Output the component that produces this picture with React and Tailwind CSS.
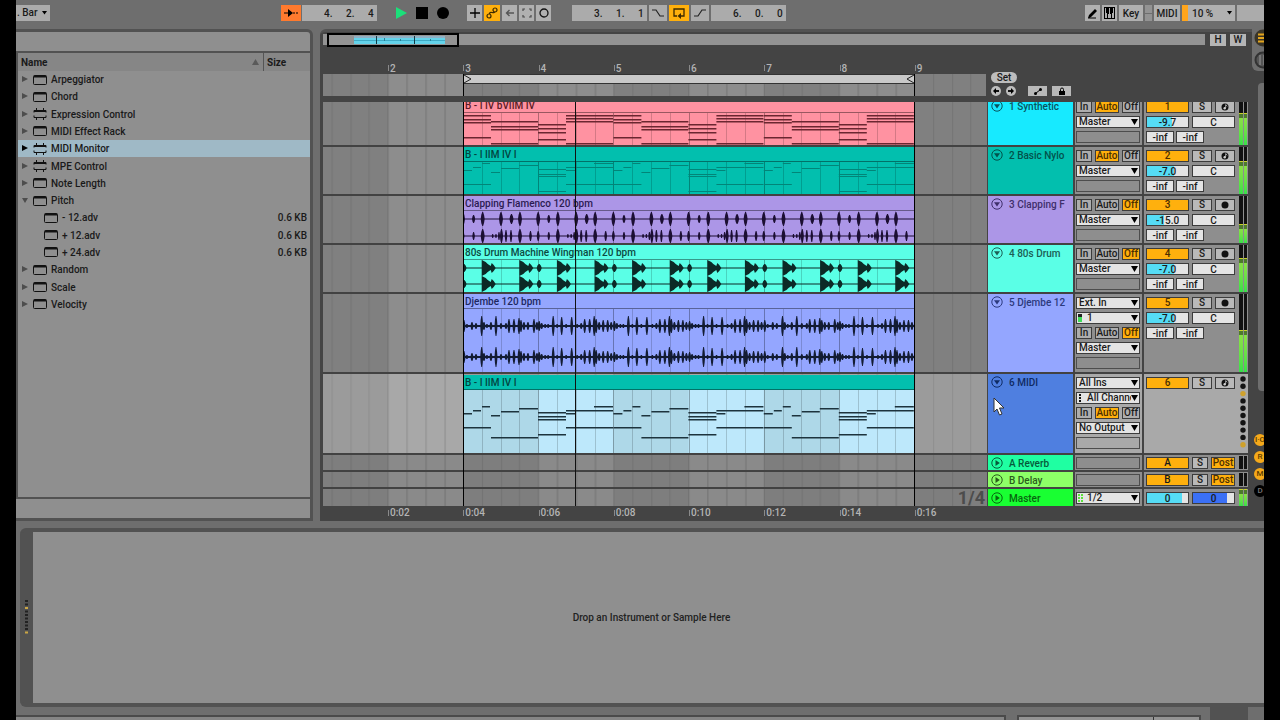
import React, { useState } from "react";

const BAR = 75.2;
const CLIP_W = 452;

// [start, end, y] inside a two bar pattern
const chordNotes = [
  [0, 28, 2], [0, 28, 6], [0, 28, 9], [0, 28, 24],
  [28, 75, 8], [28, 75, 13], [28, 75, 16], [28, 75, 30],
  [75, 103, 11], [75, 103, 15], [75, 103, 19], [75, 103, 26],
  [103, 150, 2], [103, 150, 5], [103, 150, 8], [103, 150, 30],
];

const guitarNotes = [
  [0, 9, 8], [10, 18, 5], [19, 27, 1], [28, 37, 10], [38, 56, 6], [56, 75, 3],
  [0, 28, 22], [28, 75, 32],
  [75, 103, 7], [75, 103, 12], [75, 103, 14], [75, 103, 29],
  [103, 112, 8], [103, 131, 5], [131, 150, 1], [131, 150, 5], [103, 150, 22],
];

const midiNotes = [
  [0, 9, 23], [10, 18, 20], [19, 27, 16], [28, 37, 25], [38, 56, 21], [56, 75, 18],
  [0, 28, 37], [28, 75, 47],
  [75, 103, 22], [75, 103, 26], [75, 103, 29], [75, 103, 44],
  [103, 112, 23], [103, 150, 20], [131, 150, 16], [103, 150, 37],
];

// [x, half height, half width] inside one bar
const clapTop = [[0, 7, 2], [10.6, 4, 1.6], [19.7, 7, 2], [38, 7, 2], [48.5, 5, 2], [57, 7, 2]];
const clapBottom = [
  [0, 5, 1.5], [10.6, 4, 1.3], [19.7, 7, 2], [29.7, 2, 1], [33, 2, 1], [36, 4, 1.1], [38.5, 7, 1.6],
  [43, 6, 1.3], [48, 6, 1.3], [57, 7, 2], [67.5, 5, 1.4],
];
const djembeA = [
  [1, 6], [4, 2], [9, 4], [13, 3], [18.7, 10], [21, 4], [24, 2], [28, 4], [33, 10], [38, 3], [43, 3],
  [46, 7], [51, 7], [56, 8], [58, 6], [61, 4], [65, 4], [71, 7], [74, 4],
];
const djembeB = [
  [1, 5], [3.5, 3], [7, 2], [10, 2], [15, 10], [19, 2], [23.5, 9], [28, 2], [33.5, 9], [39, 2], [43, 3],
  [46.5, 7], [51.5, 7], [56, 10], [58, 7], [61, 4], [65, 6], [69.5, 6], [73, 4],
];

const spike = (x, cy, h, w) =>
  `M${x - w} ${cy}L${x - w * 0.7} ${cy - h * 0.6}L${x - 0.4} ${cy - h}L${x + 0.4} ${cy - h}L${x + w * 0.7} ${cy - h * 0.55}L${x + w} ${cy}L${x + w * 0.7} ${cy + h * 0.55}L${x + 0.4} ${cy + h}L${x - 0.4} ${cy + h}L${x - w * 0.7} ${cy + h * 0.6}Z`;

const kick = (x, cy) =>
  `M${x} ${cy - 8}L${x + 2} ${cy - 7}L${x + 4} ${cy - 6}L${x + 6} ${cy - 4}L${x + 9} ${cy - 2}L${x + 10} ${cy - 5}L${x + 12} ${cy - 3}L${x + 14} ${cy}L${x + 12} ${cy + 3}L${x + 10} ${cy + 5}L${x + 9} ${cy + 2}L${x + 6} ${cy + 4}L${x + 4} ${cy + 6}L${x + 2} ${cy + 7}L${x} ${cy + 8}Z`;

const bars = [0, 1, 2, 3, 4, 5];

function wavePath(kind) {
  let d = "";
  bars.forEach((b) => {
    const x = b * BAR;
    if (kind === "clap") {
      clapTop.forEach((h) => (d += spike(x + h[0], 8, h[1], h[2])));
      clapBottom.forEach((h) => (d += spike(x + h[0], 25, h[1], h[2])));
    }
    if (kind === "drum") {
      [8, 24].forEach((cy) => {
        d += spike(x + 1, cy, 4, 2.5) + kick(x + 18.7, cy) + kick(x + 56.3, cy);
      });
    }
    if (kind === "djembe") {
      const hits = b % 4 === 0 ? djembeA : djembeB;
      [17, 48].forEach((cy) => hits.forEach((h) => (d += spike(x + h[0], cy, h[1], 1.5))));
    }
  });
  return d;
}

const centers = { clap: [8, 25], drum: [8, 24], djembe: [17, 48] };

function ClipBody({ clip, height }) {
  return (
    <svg width={CLIP_W} height={height} className="block" aria-hidden="true">
      {clip.shade &&
        [0, 2, 4].map((b) => (
          <rect key={b} x={b * BAR} y="0" width={BAR} height={height} fill="#aed8e8" />
        ))}
      {Array.from({ length: 24 }, (_, i) => (
        <rect key={i} x={Math.round(i * 18.8)} y="0" width="1" height={height} fill="#000" opacity={i % 4 ? 0.17 : 0.3} />
      ))}
      {clip.notes &&
        [0, 1, 2].map((p) =>
          clip.notes.map((n, i) => (
            <rect
              key={p + "-" + i}
              x={p * 2 * BAR + n[0]}
              y={n[2]}
              width={n[1] - n[0]}
              height={clip.thin ? 1 : 1.5}
              fill={clip.ink}
            />
          )),
        )}
      {clip.wave && (
        <g fill={clip.ink}>
          {centers[clip.wave].map((cy) => (
            <rect key={cy} x="0" y={clip.wave === "djembe" ? cy - 1 : cy - 0.5} width={CLIP_W} height={clip.wave === "djembe" ? 2 : 1} />
          ))}
          <path d={wavePath(clip.wave)} />
        </g>
      )}
    </svg>
  );
}

const tracks = [
  {
    id: "1", name: "1 Synthetic", h: "h-[49px]", body: 33, head: "bg-[#17eaff]", ink: "text-[#07545e]",
    monitor: "Auto", volume: "-9.7", fill: 60, midi: true, level: 58,
    clip: { title: "B - I IV bVIIM IV", bg: "bg-[#ff92a1]", text: "text-[#5c1a24]", notes: chordNotes, ink: "#6b2630" },
  },
  {
    id: "2", name: "2 Basic Nylo", h: "h-[49px]", body: 33, head: "bg-[#02bfae]", ink: "text-[#02524b]",
    monitor: "Auto", volume: "-7.0", fill: 66, midi: true, level: 60,
    clip: { title: "B - I IIM IV I", bg: "bg-[#02bfae]", text: "text-[#02453f]", notes: guitarNotes, ink: "#028578", thin: true },
  },
  {
    id: "3", name: "3 Clapping F", h: "h-[49px]", body: 33, head: "bg-[#ac96e7]", ink: "text-[#3f2f6b]",
    monitor: "Off", volume: "-15.0", fill: 42, level: 30,
    clip: { title: "Clapping Flamenco 120 bpm", bg: "bg-[#ac96e7]", text: "text-[#2b1b52]", wave: "clap", ink: "#1c0f33" },
  },
  {
    id: "4", name: "4 80s Drum", h: "h-[49px]", body: 33, head: "bg-[#5affe6]", ink: "text-[#1c5e54]",
    monitor: "Off", volume: "-7.0", fill: 66, level: 62,
    clip: { title: "80s Drum Machine Wingman 120 bpm", bg: "bg-[#5affe6]", text: "text-[#0c4a42]", wave: "drum", ink: "#0c2a27" },
  },
  {
    id: "5", name: "5 Djembe 12", h: "h-[80px]", body: 63, head: "bg-[#94a6ff]", ink: "text-[#2c3a7d]",
    input: "Ext. In", channel: "1", monitor: "Off", volume: "-7.0", fill: 66, level: 48,
    clip: { title: "Djembe 120 bpm", bg: "bg-[#94a6ff]", text: "text-[#1d2860]", wave: "djembe", ink: "#131c33" },
  },
  {
    id: "6", name: "6 MIDI", h: "h-[81px]", body: 63, head: "bg-[#4f7fe0]", ink: "text-[#0f2b63]",
    input: "All Ins", channel: "All Channels", monitor: "Auto", output: "No Output", midi: true, selected: true,
    clip: { title: "B - I IIM IV I", bg: "bg-[#bde8fb]", titleBg: "bg-[#02bfae]", text: "text-[#02453f]", notes: midiNotes, ink: "#1d333d", shade: true },
  },
];

const returns = [
  { id: "A", name: "A Reverb", head: "bg-[#1fffa2]", ink: "text-[#06593a]" },
  { id: "B", name: "B Delay", head: "bg-[#8dff67]", ink: "text-[#2b5c1c]" },
];

const devices = [
  { name: "Arpeggiator" },
  { name: "Chord" },
  { name: "Expression Control", max: true },
  { name: "MIDI Effect Rack" },
  { name: "MIDI Monitor", max: true },
  { name: "MPE Control", max: true },
  { name: "Note Length" },
  { name: "Pitch", open: true },
  { name: "- 12.adv", child: true },
  { name: "+ 12.adv", child: true },
  { name: "+ 24.adv", child: true },
  { name: "Random" },
  { name: "Scale" },
  { name: "Velocity" },
];

function LaneGrid({ id, light, dark, line }) {
  return (
    <svg className="absolute inset-0 h-full w-full" aria-hidden="true">
      <defs>
        <pattern id={id} x="140" y="0" width={BAR * 2} height="100" patternUnits="userSpaceOnUse">
          <rect width={BAR} height="100" fill={dark} />
          <rect x={BAR} width={BAR} height="100" fill={light} />
          {[0, 1, 2, 3, 4, 5, 6, 7].map((i) => (
            <rect key={i} x={Math.round(i * 18.8)} width="1" height="100" fill={line} />
          ))}
        </pattern>
      </defs>
      <rect width="100%" height="100%" fill={`url(#${id})`} />
    </svg>
  );
}

function Select({ label, value, className, dot }) {
  return (
    <div className={"relative flex h-3 w-16 border border-[#3c3c3c] bg-[#e4e4e4] " + (className || "")}>
      {dot && (
        <svg width="8" height="10" className="shrink-0" aria-hidden="true">
          {dot === "audio" && (
            <>
              <rect x="1" y="1" width="4" height="3" fill="#222" />
              <rect x="1" y="4" width="4" height="5" fill="#3edc57" />
            </>
          )}
          {dot === "midi" && <path d="M3 1v2M3 4v2M3 7v2" stroke="#111" strokeWidth="2" />}
          {dot === "pair" && <path d="M2 1v9M5 1v9" stroke="#5be23b" strokeWidth="2" strokeDasharray="2 1" />}
        </svg>
      )}
      <select aria-label={label} className="w-full min-w-0 appearance-none pl-[2px] pr-2 text-[10px] leading-[10px] outline-none">
        <option>{value}</option>
      </select>
      <svg width="7" height="6" viewBox="0 0 7 6" className="pointer-events-none absolute right-px top-[2px] bg-[#e4e4e4]" aria-hidden="true">
        <path d="M0 0h7L3.5 6z" fill="#000" />
      </svg>
    </div>
  );
}

function Monitor({ value, name }) {
  const [mode, setMode] = useState(value);
  return (
    <div className="flex w-16 justify-between">
      {["In", "Auto", "Off"].map((m) => (
        <button
          key={m}
          aria-label={`${name} monitor ${m}`}
          onClick={() => setMode(m)}
          className={
            "flex h-3 items-center justify-center border border-[#3c3c3c] leading-none " +
            (m === "In" ? "w-4 " : m === "Auto" ? "w-6 " : "w-[18px] ") +
            (mode === m ? "bg-[#ffb00d] text-[#4d2f00]" : "bg-[#adadad]")
          }
        >
          {m}
        </button>
      ))}
    </div>
  );
}

const boxCls = "flex h-3 items-center justify-center border border-[#3c3c3c] leading-none ";

function Num({ label, value, fill, color, className }) {
  const style = fill
    ? { backgroundImage: `linear-gradient(to right, ${color || "#55dcf5"} ${fill}%, #e4e4e4 ${fill}%)` }
    : undefined;
  return (
    <input
      aria-label={label}
      defaultValue={value}
      style={style}
      className={"h-3 border border-[#3c3c3c] bg-[#e4e4e4] text-center leading-none outline-none " + (className || "w-[43px]")}
    />
  );
}

function Meter({ level }) {
  return (
    <div className="flex w-2 shrink-0 gap-px">
      {[0, 1].map((i) => (
        <div key={i} className="flex flex-1 flex-col bg-[#111]">
          <div className="mt-auto h-px bg-[#c8d22a]" />
          <div className="h-1 bg-[#4d7a2c]" />
          <div className="bg-linear-to-b from-[#8be046] to-[#35e04a]" style={{ height: level + "%" }} />
        </div>
      ))}
    </div>
  );
}

function MidiMeter() {
  return (
    <svg width="8" height="76" className="mt-px shrink-0" aria-hidden="true">
      {Array.from({ length: 10 }, (_, i) => (
        <circle key={i} cx="4" cy={4 + i * 7.3} r="2.7" fill={i === 2 || i === 9 ? "#cfa12c" : "#141414"} />
      ))}
    </svg>
  );
}

function Fold({ open }) {
  return (
    <svg width="12" height="12" viewBox="0 0 12 12" className="shrink-0" aria-hidden="true">
      <circle cx="6" cy="6" r="5.2" fill="none" stroke="currentColor" />
      <path d={open ? "M3 4.2h6L6 8.6z" : "M4.5 3v6L8.8 6z"} fill="currentColor" />
    </svg>
  );
}

function TrackHeader({ name, head, ink, open, className }) {
  return (
    <button
      className={"flex w-[85px] shrink-0 items-start gap-[6px] overflow-hidden whitespace-nowrap pl-[3px] text-left leading-[14px] " + head + " " + ink + " " + className}
    >
      <Fold open={open} />
      {name}
    </button>
  );
}

function Track({ track }) {
  const grey = track.selected ? "bg-[#a9a9a9]" : "bg-[#8e8e8e]";
  return (
    <div className={"flex gap-0.5 border-b-2 border-[#424242] " + track.h}>
      <div className={"relative -mr-px min-w-0 flex-1 overflow-hidden " + (track.selected ? "pt-px" : "")}>
        <LaneGrid
          id={"lane" + track.id}
          light={track.selected ? "#a8a8a8" : "#8d8d8d"}
          dark={track.selected ? "#9b9b9b" : "#808080"}
          line={track.selected ? "#8d8d8d" : "#747474"}
        />
        <div className={"relative ml-[140px] flex h-full w-[452px] flex-col overflow-hidden " + track.clip.bg}>
          <div
            className={
              "h-[15px] shrink-0 border-b border-black/40 pl-[2px] leading-[16px] " +
              (track.clip.titleBg || "") + " " + track.clip.text
            }
          >
            {track.clip.title}
          </div>
          <ClipBody clip={track.clip} height={track.body} />
        </div>
      </div>
      <TrackHeader name={track.name} head={track.head} ink={track.ink} open className="pt-0.5" />
      <div className={"flex w-[67px] shrink-0 flex-col gap-[3px] pl-px pt-[3px] " + grey}>
        {track.input && <Select label={track.name + " input"} value={track.input} />}
        {track.input && <Select label={track.name + " channel"} value={track.channel} dot={track.midi ? "midi" : "audio"} />}
        <Monitor value={track.monitor} name={track.name} />
        <Select label={track.name + " output"} value={track.output || "Master"} />
        <div className="h-3 w-16 shrink-0 border border-[#4d4d4d]" />
      </div>
      <div className={"flex w-[104px] shrink-0 justify-between pl-0.5 pr-px " + grey}>
        <div className="flex flex-col gap-[3px] pt-[3px]">
          <div className="flex gap-[3px]">
            <button className={boxCls + "w-[43px] bg-[#ffb00d] text-[#4d2f00]"}>{track.id}</button>
            <button aria-label={"Solo " + track.name} className={boxCls + "w-5 bg-[#b9b9b9]"}>S</button>
            <button aria-label={"Arm " + track.name} className={boxCls + "w-5 bg-[#b9b9b9]"}>
              <svg width="8" height="8" viewBox="0 0 8 8">
                <circle cx="4" cy="4" r="3.5" fill="#111" />
                {track.midi && (
                  <>
                    <path d="M4.7 5V1.6l1.6 1.6" stroke="#d0d0d0" strokeWidth="0.8" fill="none" />
                    <circle cx="3.7" cy="5.3" r="1.2" fill="#d0d0d0" />
                  </>
                )}
              </svg>
            </button>
          </div>
          {track.volume && (
            <>
              <div className="flex gap-[3px]">
                <Num label={track.name + " volume"} value={track.volume} fill={track.fill} />
                <Num label={track.name + " pan"} value="C" />
              </div>
              <div className="flex gap-[2px]">
                <Num label={track.name + " send A"} value="-inf" className="w-7" />
                <Num label={track.name + " send B"} value="-inf" className="w-7" />
              </div>
            </>
          )}
        </div>
        {track.level ? <Meter level={track.level} /> : <MidiMeter />}
      </div>
    </div>
  );
}

function ReturnRow({ id, name, head, ink, master }) {
  const pad = master ? "pt-[3px]" : "pt-0.5";
  return (
    <div className={"flex h-[17px] gap-0.5 border-[#424242] " + (master ? "" : "border-b-2")}>
      <div className="relative -mr-px min-w-0 flex-1">
        <LaneGrid id={"lane" + id} light="#8a8a8a" dark="#7e7e7e" line="#727272" />
        {master && (
          <div className="relative pr-0.5 text-right text-[18px] font-bold leading-[17px] text-[#4c4c4c]">1/4</div>
        )}
      </div>
      <TrackHeader name={name} head={head} ink={ink} className={pad} />
      <div className={"w-[67px] shrink-0 bg-[#8e8e8e] pl-px " + pad}>
        {master ? <Select label="Master output" value="1/2" dot="pair" /> : <div className="h-3 w-16 border border-[#4d4d4d]" />}
      </div>
      <div className="flex w-[104px] shrink-0 justify-between bg-[#8e8e8e] pl-0.5 pr-px">
        <div className={"flex gap-[3px] " + pad}>
          {master ? (
            <>
              <Num label="Master volume" value="0" fill={85} />
              <Num label="Cue volume" value="0" fill={84} color="#3b70f5" />
            </>
          ) : (
            <>
              <button className={boxCls + "w-[43px] bg-[#ffb00d]"}>{id}</button>
              <button aria-label={"Solo " + name} className={boxCls + "w-4 bg-[#b9b9b9]"}>S</button>
              <button aria-label={name + " post"} className={boxCls + "w-6 bg-[#ffb00d] text-[#4d2f00]"}>Post</button>
            </>
          )}
        </div>
        {master ? (
          <Meter level={70} />
        ) : (
          <div className="flex w-2 gap-px py-px">
            <div className="flex-1 bg-[#111]" />
            <div className="flex-1 bg-[#111]" />
          </div>
        )}
      </div>
    </div>
  );
}

function Position({ label, parts }) {
  return (
    <div className="flex h-4 w-[75px] items-center bg-[#ababab] pl-[22px]">
      {parts.map((p, i) => (
        <input
          key={i}
          aria-label={label + " " + (i + 1)}
          defaultValue={p}
          className={"h-4 bg-transparent outline-none " + (i === 2 ? "w-2" : "w-[22px]")}
        />
      ))}
    </div>
  );
}

function ToolButton({ label, className, children }) {
  return (
    <button aria-label={label} className={"flex h-4 items-center justify-center " + (className || "w-[15px] bg-[#b0b0b0]")}>
      {children}
    </button>
  );
}

function Toolbar() {
  return (
    <header className="flex h-[29px] shrink-0 items-start pt-[5px]">
      <div className="relative h-4 w-[34px] bg-[#ababab]">
        <select aria-label="Quantization" className="h-4 w-full appearance-none pl-px leading-4 outline-none">
          <option>. Bar</option>
        </select>
        <svg width="5" height="4" className="pointer-events-none absolute right-[3px] top-[6px]" aria-hidden="true">
          <path d="M0 0h5L2.5 3.5z" />
        </svg>
      </div>
      <div className="ml-[231px] flex gap-px">
        <ToolButton label="Follow" className="w-5 bg-[#ff7a2e]">
          <svg width="14" height="8" viewBox="0 0 14 8">
            <path d="M0 4h5M9 4h2M12 4h2" stroke="#000" strokeWidth="1.2" />
            <path d="M4 0l5 4-5 4z" />
          </svg>
        </ToolButton>
        <Position label="Song position" parts={["4.", "2.", "4"]} />
      </div>
      <div className="ml-4 flex gap-[5px]">
        <button aria-label="Play" className="flex h-4 w-4 items-center justify-center">
          <svg width="13" height="14"><path d="M1 1v12l11-6z" fill="#1be07a" /></svg>
        </button>
        <button aria-label="Stop" className="flex h-4 w-4 items-center justify-center">
          <svg width="12" height="12"><rect width="12" height="12" /></svg>
        </button>
        <button aria-label="Record" className="flex h-4 w-4 items-center justify-center">
          <svg width="12" height="12"><circle cx="6" cy="6" r="6" /></svg>
        </button>
      </div>
      <div className="ml-4 flex gap-[2px]">
        <ToolButton label="Overdub">
          <svg width="10" height="10"><path d="M5 0v10M0 5h10" stroke="#000" strokeWidth="1.3" /></svg>
        </ToolButton>
        <ToolButton label="Automation arm" className="w-4 bg-[#ffb00d]">
          <svg width="12" height="12" fill="none" stroke="#3d2a00" strokeWidth="1.2">
            <circle cx="3" cy="9" r="2" />
            <circle cx="9" cy="3" r="2" />
            <path d="M3.5 7Q3.500 5 6 5.500T8.500 5" />
          </svg>
        </ToolButton>
        <ToolButton label="Re-enable automation">
          <svg width="10" height="8" fill="none" stroke="#555" strokeWidth="1.4"><path d="M9 4H2M4.5 1L1.5 4l3 3" /></svg>
        </ToolButton>
        <ToolButton label="Capture">
          <svg width="10" height="10" fill="none" stroke="#4a4a4a" strokeWidth="1.2">
            <path d="M1 3V1h2M7 1h2v2M9 7v2H7M3 9H1V7" />
          </svg>
        </ToolButton>
        <ToolButton label="Session record">
          <svg width="10" height="10" fill="none" stroke="#111" strokeWidth="1.3"><circle cx="5" cy="5" r="4" /></svg>
        </ToolButton>
      </div>
      <div className="ml-[21px] flex gap-[2px]">
        <Position label="Loop start" parts={["3.", "1.", "1"]} />
        <ToolButton label="Punch in" className="w-[18px] bg-[#ababab]">
          <svg width="14" height="8" fill="none" stroke="#222" strokeWidth="1.2"><path d="M1 1h4l4 6h4" /></svg>
        </ToolButton>
        <ToolButton label="Loop" className="w-5 bg-[#ffb00d]">
          <svg width="14" height="12" fill="none" stroke="#3d2a00" strokeWidth="1.3">
            <path d="M5 9H2V2h10v7H9" />
            <path d="M9 6v6L5.500 9z" fill="#3d2a00" stroke="none" />
          </svg>
        </ToolButton>
        <ToolButton label="Punch out" className="w-[18px] bg-[#ababab]">
          <svg width="14" height="8" fill="none" stroke="#222" strokeWidth="1.2"><path d="M1 7h4l4-6h4" /></svg>
        </ToolButton>
        <Position label="Loop length" parts={["6.", "0.", "0"]} />
      </div>
      <div className="ml-auto flex gap-[2px]">
        <ToolButton label="Draw mode">
          <svg width="12" height="12"><path d="M1 11l1-3 6-6 2 2-6 6zM1 10.5h8v1H1z" /></svg>
        </ToolButton>
        <ToolButton label="Computer MIDI keyboard">
          <svg width="11" height="12">
            <path d="M0 0h11v12H0z" />
            <path d="M1 11V1h1v5h1v5zM4 11V7h1V1h1v6h1v4zM8 11V6h1V1h1v10z" fill="#b0b0b0" />
          </svg>
        </ToolButton>
        <ToolButton label="Key map" className="w-6 bg-[#b0b0b0]">Key</ToolButton>
        <div className="flex h-4 w-[7px] flex-col gap-px">
          <div className="flex-1 bg-[#939393]" />
          <div className="flex-1 bg-[#939393]" />
        </div>
        <ToolButton label="MIDI map" className="w-[26px] bg-[#b0b0b0]">MIDI</ToolButton>
        <div className="relative flex h-4 w-[53px] bg-[#b0b0b0]">
          <div className="w-[6px] bg-[#ffa51c]" />
          <select aria-label="CPU load" className="h-4 flex-1 appearance-none pl-1 pt-px leading-[15px] outline-none">
            <option>10 %</option>
          </select>
          <svg width="5" height="4" className="pointer-events-none absolute right-[3px] top-[6px]" aria-hidden="true">
            <path d="M0 0h5L2.5 3.5z" />
          </svg>
        </div>
        <div className="h-4 w-[27px] bg-[#ababab]" />
      </div>
    </header>
  );
}

function DeviceIcon({ max }) {
  return (
    <svg width="14" height="12" viewBox="0 0 14 12" className="shrink-0" fill="none" stroke="#111" aria-hidden="true">
      {max ? (
        <>
          <path d="M1 4.500V2.500h12v2M1 7.500v2h12v-2" />
          <path d="M1 3h12" strokeWidth="2" />
          <path d="M3.500 0v3M10.500 0v3M3.500 9v3M10.500 9v3" />
        </>
      ) : (
        <>
          <rect x="0.5" y="1.5" width="13" height="9" rx="1" />
          <path d="M1 2.5h12" strokeWidth="2" />
        </>
      )}
    </svg>
  );
}

function Browser() {
  const [selected, setSelected] = useState("MIDI Monitor");
  return (
    <aside className="flex w-[297px] shrink-0 flex-col rounded-tr-md border-y-[3px] border-r-[3px] border-[#525252] bg-[#8f8f8f]">
      <input aria-label="Search" className="h-[21px] w-full shrink-0 border-b-2 border-[#525252] outline-none" />
      <table className="flex flex-1 flex-col border-l-2 border-[#525252]">
        <thead className="bg-[#868686]">
          <tr className="flex h-[18px] items-stretch text-left">
            <th className="flex flex-1 items-center justify-between pl-[3px] pr-1 font-bold">
              Name
              <svg width="7" height="6" aria-hidden="true"><path d="M0 6h7L3.500 0z" fill="#5a5a5a" /></svg>
            </th>
            <th className="flex w-[47px] items-center border-l border-[#555] pl-[3px] font-bold">Size</th>
          </tr>
        </thead>
        <tbody className="grid h-[242px] auto-rows-fr">
          {devices.map((d) => (
            <tr
              key={d.name}
              onClick={() => setSelected(d.name)}
              className={"flex items-center " + (selected === d.name ? "bg-[#9fb9c6]" : "")}
            >
              <td className={"flex flex-1 items-center gap-1 " + (d.child ? "pl-[26px]" : "pl-1")}>
                {!d.child && (
                  <svg width="7" height="7" className="shrink-0" aria-hidden="true">
                    <path d={d.open ? "M0 1h6L3 6z" : "M0 0v6l6-3z"} fill={selected === d.name ? "#000" : "#4d4d4d"} />
                  </svg>
                )}
                <DeviceIcon max={d.max} />
                {d.name}
              </td>
              <td className="w-[47px] pr-[3px] text-right">{d.child ? "0.6 KB" : ""}</td>
            </tr>
          ))}
        </tbody>
      </table>
      <div className="h-[21px] shrink-0 border-t-2 border-[#525252]" />
    </aside>
  );
}

function Ruler({ labels, className }) {
  return (
    <div className={"flex w-[667px] pl-[65px] text-[#b4b4b4] " + className}>
      {labels.map((l) => (
        <div key={l} className="flex flex-1 gap-px">
          <div className="h-[6px] w-px self-center bg-[#8a8a8a]" />
          <span className="self-center">{l}</span>
        </div>
      ))}
    </div>
  );
}

function Arrangement() {
  return (
    <main className="flex min-w-0 flex-1 rounded-tl-md border-t-[3px] border-[#525252] bg-[#444]">
      <div className="flex min-w-0 flex-1 flex-col pl-[3px] pt-px">
        <div className="flex h-[13px] items-center gap-1">
          <div className="flex h-[11px] flex-1 items-center bg-[#939393] pl-1">
            <div className="flex h-[14px] w-[132px] border-2 border-black py-px pl-[25px]">
              <svg width="91" height="8" className="shrink-0" aria-hidden="true">
                <rect width="91" height="8" fill="#63d3ea" />
                <rect width="91" height="2" fill="#8fb0c4" />
                <path d="M0 4.500h91" stroke="#3fa9c4" />
                <path d="M22.500 0v8M60.500 0v8" stroke="#123a44" />
                <path d="M30.500 2v3M46.500 3v2M76.500 3v2" stroke="#2a7d92" />
              </svg>
            </div>
          </div>
          <button className="ml-[1px] h-3 w-4 bg-[#b5b5b5] leading-3">H</button>
          <button className="mr-0.5 h-3 w-4 bg-[#b5b5b5] leading-3">W</button>
        </div>
        <div className="flex">
          <div className="min-w-0 flex-1">
            <Ruler labels={["2", "3", "4", "5", "6", "7", "8", "9"]} className="h-7 pt-4" />
            <div className="relative mr-0.5 h-[22px]">
              <LaneGrid id="scrub" light="#8d8d8d" dark="#808080" line="#747474" />
              <div className="relative flex h-full">
                <div className="ml-[140px] h-full w-[452px] border-x border-black">
                  <div className="flex h-[10px] items-center justify-between border-y border-[#333] bg-[#c9c9c9]">
                    <svg width="8" height="8" fill="none" stroke="#222"><path d="M0 0l7 4L0 8" /></svg>
                    <svg width="8" height="8" fill="none" stroke="#222"><path d="M8 0L1 4l7 4" /></svg>
                  </div>
                </div>
              </div>
            </div>
          </div>
          <div className="flex w-[260px] shrink-0 flex-col items-start justify-end gap-[3px] pl-[3px]">
            <button className="h-[11px] w-[26px] rounded-full bg-[#bdbdbd] leading-[12px]">Set</button>
            <div className="flex items-center">
              <button aria-label="Previous locator">
                <svg width="10" height="10"><circle cx="5" cy="5" r="5" fill="#bdbdbd" /><path d="M8 5H4" stroke="#111" strokeWidth="2" /><path d="M5 2L2 5l3 3z" /></svg>
              </button>
              <button aria-label="Next locator" className="ml-[5px]">
                <svg width="10" height="10"><circle cx="5" cy="5" r="5" fill="#bdbdbd" /><path d="M2 5h4" stroke="#111" strokeWidth="2" /><path d="M5 2l3 3-3 3z" /></svg>
              </button>
              <button aria-label="Automation mode" className="ml-3 flex h-[10px] w-[19px] items-center justify-center bg-[#b9b9b9]">
                <svg width="8" height="7"><circle cx="1.5" cy="5.5" r="1.5" /><circle cx="6.5" cy="1.5" r="1.5" /><path d="M1.5 5.5L6.5 1.5" stroke="#000" /></svg>
              </button>
              <button aria-label="Lock envelopes" className="ml-[5px] flex h-[10px] w-[19px] items-center justify-center bg-[#b9b9b9]">
                <svg width="8" height="8"><path d="M1 4h6v4H1z" /><path d="M2.5 4V2.5a1.5 1.5 0 013 0V4" fill="none" stroke="#000" /></svg>
              </button>
            </div>
          </div>
        </div>
        <div className="relative mt-[6px]">
          <div className="overflow-hidden">
            <div className="-mt-1">
              {tracks.map((t) => (
                <Track key={t.id} track={t} />
              ))}
            </div>
            {returns.map((r) => (
              <ReturnRow key={r.id} {...r} />
            ))}
            <ReturnRow id="M" name="Master" head="bg-[#19ff32]" ink="text-[#07660f]" master />
          </div>
          {/* loop borders and playhead */}
          <div className="pointer-events-none absolute inset-y-0 left-[140px] w-[452px] border-x border-black">
            <div className="ml-[111px] h-full w-px bg-[#111]" />
          </div>
          <svg width="12" height="20" viewBox="0 0 12 20" className="pointer-events-none absolute left-[670px] top-[295px]" aria-hidden="true">
            <path d="M1 1v14l3-3 2.5 6 2.5-1-2.5-6H11z" fill="#fff" stroke="#333" />
          </svg>
        </div>
        <Ruler labels={["0:02", "0:04", "0:06", "0:08", "0:10", "0:12", "0:14", "0:16"]} className="h-[15px] pb-[2px]" />
      </div>
      <RightStrip />
    </main>
  );
}

function RightStrip() {
  return (
    <div className="-mt-[3px] flex w-4 shrink-0 flex-col items-end overflow-hidden">
      <div className="flex h-[42px] w-3 shrink-0 flex-col gap-1 rounded-bl-md bg-[#6e6e6e] pl-[2px]">
        <button aria-label="Arrangement view">
          <svg width="18" height="18"><circle cx="9" cy="9" r="8.5" fill="#3a3528" /><path d="M4 5.5h10M4 9h10M4 12.5h10" stroke="#e3a51d" strokeWidth="2" /></svg>
        </button>
        <button aria-label="Session view">
          <svg width="18" height="18"><circle cx="9" cy="9" r="7.5" fill="#555" stroke="#333" strokeWidth="2" /><path d="M6 4v10M10 4v10" stroke="#999" /></svg>
        </button>
      </div>
      <div className="mt-3 h-[308px] w-[6px] shrink-0 rounded-l bg-[#6e6e6e]" />
      <div className="mt-[43px] flex w-[10px] flex-col gap-[5px]">
        {["I·O", "R", "M", "D"].map((c) => (
          <button
            key={c}
            className={
              "flex h-3 w-3 items-center justify-center rounded-full text-[8px] leading-none " +
              (c === "D" ? "bg-black text-[#777]" : "bg-[#f5a91a] text-[#5c3d00]")
            }
          >
            {c}
          </button>
        ))}
      </div>
    </div>
  );
}

function DeviceView() {
  return (
    <section className="ml-1 mt-[7px] flex min-h-[179px] flex-1 rounded-l-md border-y-4 border-[#525252] bg-[#525252]">
      <div className="flex w-[13px] items-center justify-center">
        <svg width="4" height="36" aria-hidden="true">
          {Array.from({ length: 10 }, (_, i) => (
            <rect key={i} x="0" y={i * 3.5} width="3" height="2" fill={i === 2 || i === 9 ? "#c9a545" : "#222"} />
          ))}
        </svg>
      </div>
      <div className="flex flex-1 items-center justify-center bg-[#8f8f8f]">
        <p className="pl-[6px] text-[#222]">Drop an Instrument or Sample Here</p>
      </div>
    </section>
  );
}

export default function App() {
  return (
    <div className="h-screen min-h-[720px] bg-black px-4 font-['Roboto','Liberation_Sans',sans-serif] text-[10px] font-medium text-[#1a1a1a]">
      <div className="flex h-full flex-col overflow-hidden bg-[#6e6e6e]">
        <Toolbar />
        <div className="flex shrink-0 gap-[7px]">
          <Browser />
          <Arrangement />
        </div>
        <DeviceView />
        <footer className="mt-2 flex h-[5px] shrink-0 gap-[11px]">
          <div className="flex-1 border-r-2 border-t-2 border-[#4a4a4a] bg-[#858585]" />
          <div className="mr-[-2px] flex w-[184px] border-2 border-b-0 border-[#4a4a4a] bg-[#939393]">
            <div className="ml-auto w-[46px] border-l border-[#333]" />
          </div>
          <div className="-mt-2 mr-4 w-[38px] bg-[#525252]" />
        </footer>
      </div>
    </div>
  );
}
